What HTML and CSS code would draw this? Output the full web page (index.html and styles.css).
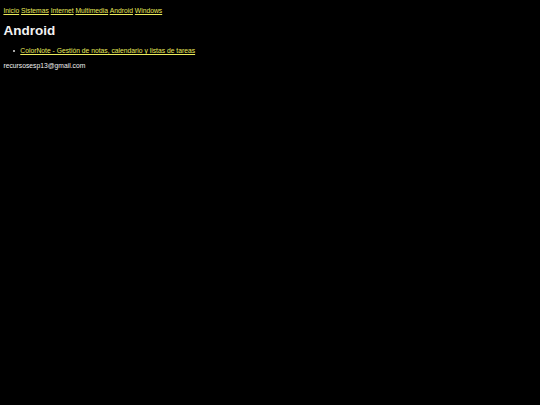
FILE: index.html
```
<!DOCTYPE html>
<html lang="es">
<head>
<meta charset="utf-8">
<title>Android</title>
<link rel="stylesheet" href="styles.css">
</head>
<body>
<nav class="nav">
<a href="#">Inicio</a> <a href="#">Sistemas</a> <a href="#">Internet</a> <a href="#">Multimedia</a> <a href="#">Android</a> <a href="#">Windows</a>
</nav>
<h1 class="title">Android</h1>
<ul class="list">
<li class="item"><a href="#">ColorNote - Gestión de notas, calendario y listas de tareas</a></li>
</ul>
<p class="mail">recursosesp13@gmail.com</p>
</body>
</html>
```
FILE: styles.css
```
html { background: #000; }
body {
  margin: 3.4px;
  background: #000;
  color: #f2f2f2;
  font-family: "Liberation Sans", Arial, sans-serif;
  font-size: 6.75px;
}
a { color: #eaea5a; }
.nav { margin: 0; padding-top: 4px; }
.title {
  font-size: 13.5px;
  margin: 9px 0;
}
.list {
  margin: 6.75px 0;
  padding-left: 16.9px;
  list-style: none;
}
.item::before {
  content: "";
  display: inline-block;
  width: 2px;
  height: 2px;
  border-radius: 50%;
  background: #ddd;
  margin-left: -7px;
  margin-right: 5px;
  vertical-align: 1px;
}
.mail { margin: 7.75px 0; }
```
